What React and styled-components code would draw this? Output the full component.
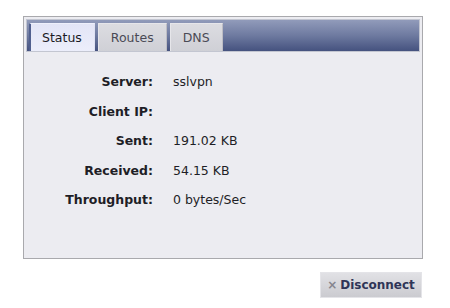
import React, { useState } from 'react';
import styled, { createGlobalStyle } from 'styled-components';

const GlobalStyle = createGlobalStyle`
  body {
    margin: 0;
    background: #ffffff;
    font-family: "DejaVu Sans", Verdana, sans-serif;
  }
`;

const tabs = ['Status', 'Routes', 'DNS'];

const stats = [
  { label: 'Server:', value: 'sslvpn' },
  { label: 'Client IP:', value: '' },
  { label: 'Sent:', value: '191.02 KB' },
  { label: 'Received:', value: '54.15 KB' },
  { label: 'Throughput:', value: '0 bytes/Sec' },
];

const App = () => {
  const [active, setActive] = useState('Status');

  return (
    <Page>
      <GlobalStyle />
      <Panel>
        <TabBar>
          {tabs.map((t) => (
            <Tab key={t} active={t === active} onClick={() => setActive(t)}>
              {t}
            </Tab>
          ))}
        </TabBar>
        <Body>
          <StatGrid>
            {stats.map((s) => (
              <React.Fragment key={s.label}>
                <Label>{s.label}</Label>
                <Value>{s.value}</Value>
              </React.Fragment>
            ))}
          </StatGrid>
        </Body>
      </Panel>
      <Actions>
        <Button>
          <CloseMark>×</CloseMark>
          Disconnect
        </Button>
      </Actions>
    </Page>
  );
};

const Page = styled.div`
  width: 400px;
  padding: 16px 0 0 23px;
`;

const Panel = styled.div`
  box-sizing: border-box;
  height: 243px;
  border: 1px solid #a9a9ad;
  padding: 2px;
  background-color: #ececf1;
  background-image: radial-gradient(#e1e1e8 0.6px, transparent 0.7px);
  background-size: 2px 2px;
  display: flex;
  flex-direction: column;
`;

const TabBar = styled.div`
  height: 31px;
  border: 1px solid #c3c6d1;
  background: linear-gradient(#919bba, #6e7aa0 50%, #45527f);
  display: flex;
  align-items: flex-end;
  gap: 3px;
  padding-left: 2px;
`;

const Tab = styled.div`
  height: 28px;
  box-sizing: border-box;
  padding: 0 12px 0 ${(p) => (p.active ? '11px' : '12px')};
  display: flex;
  align-items: center;
  font-size: 12.5px;
  cursor: pointer;
  color: ${(p) => (p.active ? '#1a1a24' : '#4a4a55')};
  border-left: ${(p) => (p.active ? '2px solid #51608f' : '1px solid #e6e6ea')};
  border-top: 1px solid ${(p) => (p.active ? '#eef0fb' : '#e6e6ea')};
  border-right: 1px solid ${(p) => (p.active ? '#dfe2f3' : '#bdbdc4')};
  background: ${(p) =>
    p.active
      ? 'linear-gradient(#e3e5f6, #eceefb)'
      : 'linear-gradient(#dcdce1, #cfd0d6)'};
`;

const Body = styled.div`
  flex: 1;
  padding-top: 15px;
`;

const StatGrid = styled.div`
  display: grid;
  grid-template-columns: 127px 1fr;
  grid-auto-rows: 29.5px;
  column-gap: 20px;
  align-items: center;
  font-size: 12.5px;
`;

const Label = styled.div`
  text-align: right;
  font-weight: bold;
  font-size: 12.5px;
  color: #1e1e26;
`;

const Value = styled.div`
  color: #1e1e26;
`;

const Actions = styled.div`
  display: flex;
  justify-content: flex-end;
  padding-top: 13px;
  padding-right: 1px;
`;

const Button = styled.button`
  width: 102px;
  height: 26px;
  border: 1px solid #e4e4e8;
  background: linear-gradient(#e1e1e5, #cbcbd0);
  font-family: "DejaVu Sans", Verdana, sans-serif;
  font-weight: bold;
  font-size: 12px;
  color: #2f3557;
  display: flex;
  align-items: center;
  justify-content: center;
  gap: 3px;
  padding: 0;
  cursor: pointer;
`;

const CloseMark = styled.span`
  color: #85858e;
  font-size: 12px;
  font-weight: bold;
`;

export default App;
